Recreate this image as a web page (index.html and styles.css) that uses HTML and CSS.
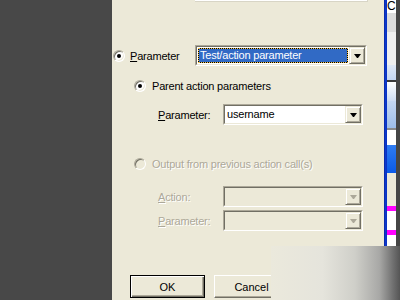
FILE: index.html
```html
<!DOCTYPE html>
<html>
<head>
  <title>Data source</title>
  <link rel="stylesheet" href="styles.css">
</head>
<body>
  <div class="screen">
    <div class="side"></div>

    <div class="dialog">
      <div class="topfield"></div>

      <div class="row-param">
        <span class="radio checked"></span>
        <span class="main-label"><u>P</u>arameter</span>
        <div class="combo wide">
          <div class="combo-in">
            <div class="combo-text selected"><span>Test/action parameter</span></div>
            <div class="combo-btn"><i class="arrow"></i></div>
          </div>
        </div>
      </div>

      <div class="opt opt-parent">
        <span class="radio checked"></span>
        <span>Parent action parameters</span>
      </div>

      <div class="field field-user">
        <span class="field-label"><u>P</u>arameter:</span>
        <div class="combo">
          <div class="combo-in">
            <div class="combo-text">username</div>
            <div class="combo-btn"><i class="arrow"></i></div>
          </div>
        </div>
      </div>

      <div class="opt opt-output disabled">
        <span class="radio"></span>
        <span>Output from previous action call(s)</span>
      </div>

      <div class="field field-action disabled">
        <span class="field-label"><u>A</u>ction:</span>
        <div class="combo">
          <div class="combo-in">
            <div class="combo-text"></div>
            <div class="combo-btn"><i class="arrow"></i></div>
          </div>
        </div>
      </div>

      <div class="field field-param disabled">
        <span class="field-label"><u>P</u>arameter:</span>
        <div class="combo">
          <div class="combo-in">
            <div class="combo-text"></div>
            <div class="combo-btn"><i class="arrow"></i></div>
          </div>
        </div>
      </div>

      <div class="buttons">
        <button class="btn default">OK</button>
        <button class="btn">Cancel</button>
      </div>
    </div>

    <div class="edge"></div>

    <div class="strip">
      <div class="s-title">Cli</div>
      <div class="s-gray"></div>
      <div class="s-light"></div>
      <div class="s-pale"></div>
      <div class="s-line"></div>
      <div class="s-sky"></div>
      <div class="s-blue"></div>
      <div class="s-rule"></div>
      <div class="s-white"></div>
      <div class="s-active"></div>
      <div class="s-beige"></div>
      <div class="s-pink"></div>
      <div class="s-white2"></div>
      <div class="s-pink"></div>
      <div class="s-white3"></div>
    </div>

    <div class="dark"></div>

    <div class="fade"></div>
  </div>
</body>
</html>
```

FILE: styles.css
```css
html, body {
  margin: 0;
  padding: 0;
}
body {
  background: #484848;
  font-family: "Liberation Sans", Arial, sans-serif;
  font-size: 11px;
  color: #000;
}
.screen {
  position: relative;
  display: flex;
  width: 400px;
  height: 300px;
  overflow: hidden;
}
.side {
  width: 112px;
  background: #484848;
}
.dialog {
  width: 272px;
  background: #ece9d8;
}
u {
  text-decoration: underline;
  text-underline-offset: 1px;
}

/* top text field, mostly scrolled off */
.topfield {
  margin-left: 83px;
  width: 173px;
  height: 2px;
  box-sizing: border-box;
  background: #fff;
  border-bottom: 1px solid #d8d5c6;
  border-right: 1px solid #d8d5c6;
}

.row-param {
  display: flex;
  align-items: center;
  height: 21px;
  margin-top: 43px;
  padding-left: 1px;
}
.main-label {
  width: 65px;
  margin-left: 5px;
  letter-spacing: -0.2px;
}

.opt {
  display: flex;
  align-items: center;
  height: 14px;
  padding-left: 22px;
  gap: 6px;
  letter-spacing: -0.2px;
}
.opt-parent {
  margin-top: 13px;
}
.opt-output {
  margin-top: 32px;
}

.field {
  display: flex;
  align-items: center;
  height: 21px;
  padding-left: 46px;
}
.field-label {
  width: 65px;
  letter-spacing: -0.2px;
}
.field-user {
  margin-top: 11px;
}
.field-action {
  margin-top: 15px;
}
.field-param {
  margin-top: 3px;
}

/* radio buttons */
.radio {
  position: relative;
  flex: none;
  width: 12px;
  height: 12px;
  box-sizing: border-box;
  border-radius: 50%;
  border: 1px solid;
  border-color: #aca899 #fff #fff #aca899;
  background: #fff;
  box-shadow: inset 1px 1px #716f64, inset -1px -1px #ece9d8;
}
.radio.checked::after {
  content: "";
  position: absolute;
  left: 3px;
  top: 3px;
  width: 4px;
  height: 4px;
  border-radius: 50%;
  background: #000;
}
.disabled .radio {
  background: #ece9d8;
}

/* combo boxes */
.combo {
  width: 140px;
  height: 21px;
  box-sizing: border-box;
  border: 1px solid;
  border-color: #aca899 #fff #fff #aca899;
  background: #fff;
}
.combo.wide {
  width: 172px;
}
.combo-in {
  display: flex;
  height: 100%;
  box-sizing: border-box;
  border: 1px solid;
  border-color: #716f64 #ece9d8 #ece9d8 #716f64;
}
.combo-text {
  flex: 1;
  padding: 2px 0 0 2px;
  line-height: 13px;
  letter-spacing: -0.2px;
}
.combo-text.selected {
  padding: 1px;
  display: flex;
}
.combo-text.selected span {
  flex: 1;
  padding-left: 1px;
  line-height: 13px;
  color: #fff;
  border: 1px dotted #f4c24a;
  background: linear-gradient(#316ac5, #316ac5) padding-box, linear-gradient(#000, #000) border-box;
}
.combo-btn {
  display: flex;
  align-items: center;
  justify-content: center;
  width: 16px;
  box-sizing: border-box;
  background: #ece9d8;
  border: 1px solid;
  border-color: #ece9d8 #716f64 #716f64 #ece9d8;
  box-shadow: inset 1px 1px #fff, inset -1px -1px #aca899;
}
.arrow {
  width: 1px;
  height: 0;
  border-left: 3px solid transparent;
  border-right: 3px solid transparent;
  border-top: 4px solid #000;
  margin-top: 1px;
}

.disabled {
  color: #aca899;
  text-shadow: 1px 1px 0 #fff;
}
.disabled .combo {
  background: #ece9d8;
}
.disabled .arrow {
  border-top-color: #aca899;
}

/* dialog buttons */
.buttons {
  display: flex;
  gap: 9px;
  margin-top: 44px;
  padding-left: 18px;
}
.btn {
  width: 75px;
  height: 23px;
  box-sizing: border-box;
  padding: 0;
  font-family: "Liberation Sans", Arial, sans-serif;
  font-size: 11px;
  color: #000;
  background: #ece9d8;
  border: 1px solid;
  border-color: #fff #716f64 #716f64 #fff;
  box-shadow: inset -1px -1px #aca899;
}
.btn.default {
  border: 1px solid #000;
  box-shadow: inset 1px 1px #fff, inset -1px -1px #716f64, inset -2px -2px #aca899;
}

/* window border and the neighbouring window */
.edge {
  width: 3px;
  background: linear-gradient(to right, #0a1f8f, #0b3bd0 40%, #0a2fbf);
}
.strip {
  display: flex;
  flex-direction: column;
  width: 9px;
  overflow: hidden;
}
.s-title {
  height: 13px;
  background: #fff;
  font-size: 12px;
  line-height: 13px;
  white-space: nowrap;
}
.s-gray { height: 19px; background: #dcdcdc; }
.s-light { height: 33px; background: #efefef; }
.s-pale { height: 15px; background: linear-gradient(#dfe8f6, #c4d6f2); }
.s-line { height: 2px; background: #3a3a3a; }
.s-sky { height: 19px; background: linear-gradient(#ffffff, #cddcf3); }
.s-blue { height: 27px; background: linear-gradient(#c5d7f2, #9dbde9); }
.s-rule { height: 2px; background: #8a8a8a; }
.s-white { height: 15px; background: #fff; }
.s-active { height: 28px; background: linear-gradient(#2f7cf2, #0a5ae8); }
.s-beige { height: 33px; background: #ece9d8; }
.s-pink { height: 5px; background: #ff00ff; }
.s-white2 { height: 19px; background: #fff; }
.s-white3 { height: 20px; background: #fff; }
.dark {
  width: 4px;
  background: #454545;
}

/* faded corner lying over the dialog */
.fade {
  position: absolute;
  left: 271px;
  top: 246px;
  right: 0;
  bottom: 0;
  background: linear-gradient(to right, #ebe9dc 0%, #e5e4dc 40%, #cfcfc9 65%, #a8a8a6 84%, #6e6e6e 95%, #555 100%);
}
```
